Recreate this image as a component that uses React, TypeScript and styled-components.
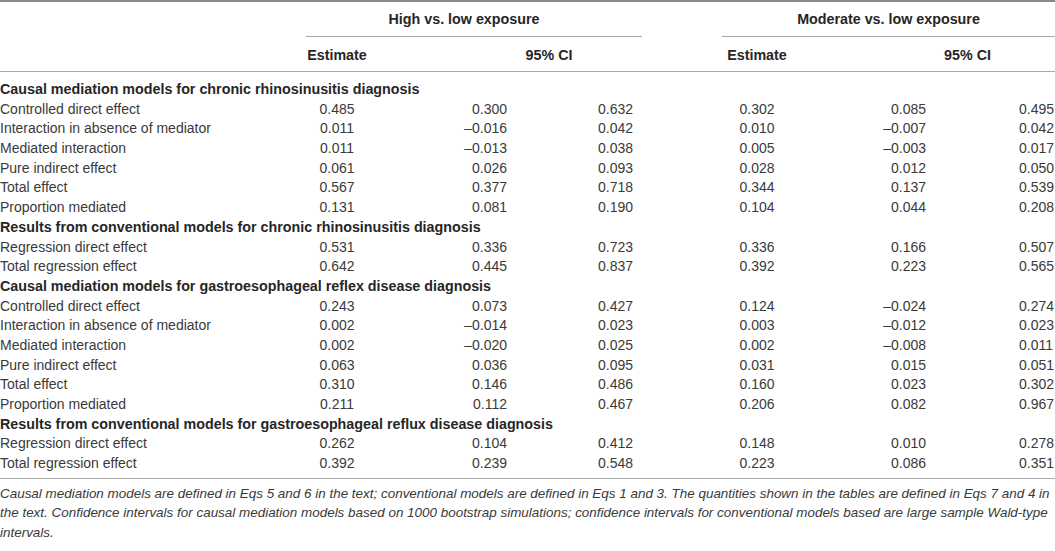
import React from "react";
import styled, { createGlobalStyle } from "styled-components";

const Global = createGlobalStyle`
  html, body { margin: 0; padding: 0; background: #ffffff; }
  body { font-family: "Liberation Sans", Arial, sans-serif; color: #333; }
`;

const COLS = "306px 62px 184px 90px 80px 70px 175px 88px";

const Wrap = styled.div`
  width: 1055px;
  border-top: 2px solid #8a8a8a;
`;

const Row = styled.div`
  display: grid;
  grid-template-columns: ${COLS};
  font-size: 14px;
  line-height: 19.7px;
  height: 19.7px;
  white-space: nowrap;
`;

const HeadRow = styled.div<{ $top: number; $bottom: number; $rule?: boolean }>`
  display: grid;
  grid-template-columns: ${COLS};
  padding-top: ${(p) => p.$top}px;
  padding-bottom: ${(p) => p.$bottom}px;
  border-bottom: ${(p) => (p.$rule ? "1px solid #a9a9a9" : "none")};
  font-size: 14.3px;
  line-height: 20px;
  font-weight: 700;
  color: #262626;
  white-space: nowrap;
`;

const GroupHead = styled.div<{ $col: string; $shift: number }>`
  grid-column: ${(p) => p.$col};
  text-align: center;
  padding: 7px ${(p) => p.$shift}px 7px 0;
  border-bottom: 1px solid #a9a9a9;
`;

const EstHead = styled.div<{ $col: number }>`
  grid-column: ${(p) => p.$col};
  text-align: center;
`;

const CIHead = styled.div<{ $col: string }>`
  grid-column: ${(p) => p.$col};
  text-align: center;
  padding-left: 88px;
`;

const Body = styled.div`
  padding: 8px 0 4px;
  border-bottom: 1px solid #a9a9a9;
`;

const SectionTitle = styled.div`
  font-size: 14.3px;
  line-height: 19.7px;
  height: 19.7px;
  font-weight: 700;
  color: #262626;
  white-space: nowrap;
`;

const Label = styled.div`
  color: #3a3a3a;
`;

const Est = styled.div`
  text-align: center;
  color: #3a3a3a;
`;

const Low = styled.div<{ $inset: number }>`
  text-align: right;
  padding-right: ${(p) => p.$inset}px;
  color: #3a3a3a;
`;

const Up = styled.div<{ $inset: number }>`
  text-align: left;
  padding-left: ${(p) => p.$inset}px;
  color: #3a3a3a;
`;

const Spacer = styled.div``;

const Footnote = styled.p`
  margin: 0;
  padding-top: 5px;
  font-size: 13.45px;
  line-height: 19.6px;
  font-style: italic;
  color: #3a3a3a;
`;

type Line = [string, string, string, string, string, string, string];

const sections: { title: string; rows: Line[] }[] = [
  {
    title: "Causal mediation models for chronic rhinosinusitis diagnosis",
    rows: [
      ["Controlled direct effect", "0.485", "0.300", "0.632", "0.302", "0.085", "0.495"],
      ["Interaction in absence of mediator", "0.011", "–0.016", "0.042", "0.010", "–0.007", "0.042"],
      ["Mediated interaction", "0.011", "–0.013", "0.038", "0.005", "–0.003", "0.017"],
      ["Pure indirect effect", "0.061", "0.026", "0.093", "0.028", "0.012", "0.050"],
      ["Total effect", "0.567", "0.377", "0.718", "0.344", "0.137", "0.539"],
      ["Proportion mediated", "0.131", "0.081", "0.190", "0.104", "0.044", "0.208"],
    ],
  },
  {
    title: "Results from conventional models for chronic rhinosinusitis diagnosis",
    rows: [
      ["Regression direct effect", "0.531", "0.336", "0.723", "0.336", "0.166", "0.507"],
      ["Total regression effect", "0.642", "0.445", "0.837", "0.392", "0.223", "0.565"],
    ],
  },
  {
    title: "Causal mediation models for gastroesophageal reflex disease diagnosis",
    rows: [
      ["Controlled direct effect", "0.243", "0.073", "0.427", "0.124", "–0.024", "0.274"],
      ["Interaction in absence of mediator", "0.002", "–0.014", "0.023", "0.003", "–0.012", "0.023"],
      ["Mediated interaction", "0.002", "–0.020", "0.025", "0.002", "–0.008", "0.011"],
      ["Pure indirect effect", "0.063", "0.036", "0.095", "0.031", "0.015", "0.051"],
      ["Total effect", "0.310", "0.146", "0.486", "0.160", "0.023", "0.302"],
      ["Proportion mediated", "0.211", "0.112", "0.467", "0.206", "0.082", "0.967"],
    ],
  },
  {
    title: "Results from conventional models for gastroesophageal reflux disease diagnosis",
    rows: [
      ["Regression direct effect", "0.262", "0.104", "0.412", "0.148", "0.010", "0.278"],
      ["Total regression effect", "0.392", "0.239", "0.548", "0.223", "0.086", "0.351"],
    ],
  },
];

export default function App() {
  return (
    <>
      <Global />
      <Wrap>
        <HeadRow $top={0} $bottom={0}>
          <GroupHead $col="2 / 5" $shift={20}>High vs. low exposure</GroupHead>
          <GroupHead $col="6 / 9" $shift={0}>Moderate vs. low exposure</GroupHead>
        </HeadRow>
        <HeadRow $top={8} $bottom={6} $rule>
          <EstHead $col={2}>Estimate</EstHead>
          <CIHead $col="3 / 5">95% CI</CIHead>
          <EstHead $col={6}>Estimate</EstHead>
          <CIHead $col="7 / 9">95% CI</CIHead>
        </HeadRow>
        <Body>
          {sections.map((s) => (
            <React.Fragment key={s.title}>
              <SectionTitle>{s.title}</SectionTitle>
              {s.rows.map((r, i) => (
                <Row key={s.title + i}>
                  <Label>{r[0]}</Label>
                  <Est>{r[1]}</Est>
                  <Low $inset={45}>{r[2]}</Low>
                  <Up $inset={46}>{r[3]}</Up>
                  <Spacer />
                  <Est>{r[4]}</Est>
                  <Low $inset={41}>{r[5]}</Low>
                  <Up $inset={52}>{r[6]}</Up>
                </Row>
              ))}
            </React.Fragment>
          ))}
        </Body>
        <Footnote>
          Causal mediation models are defined in Eqs 5 and 6 in the text; conventional models are defined in Eqs 1 and 3. The quantities shown in the tables are defined in Eqs 7 and 4 in the text. Confidence intervals for causal mediation models based on 1000 bootstrap simulations; confidence intervals for conventional models based are large sample Wald-type intervals.
        </Footnote>
      </Wrap>
    </>
  );
}
